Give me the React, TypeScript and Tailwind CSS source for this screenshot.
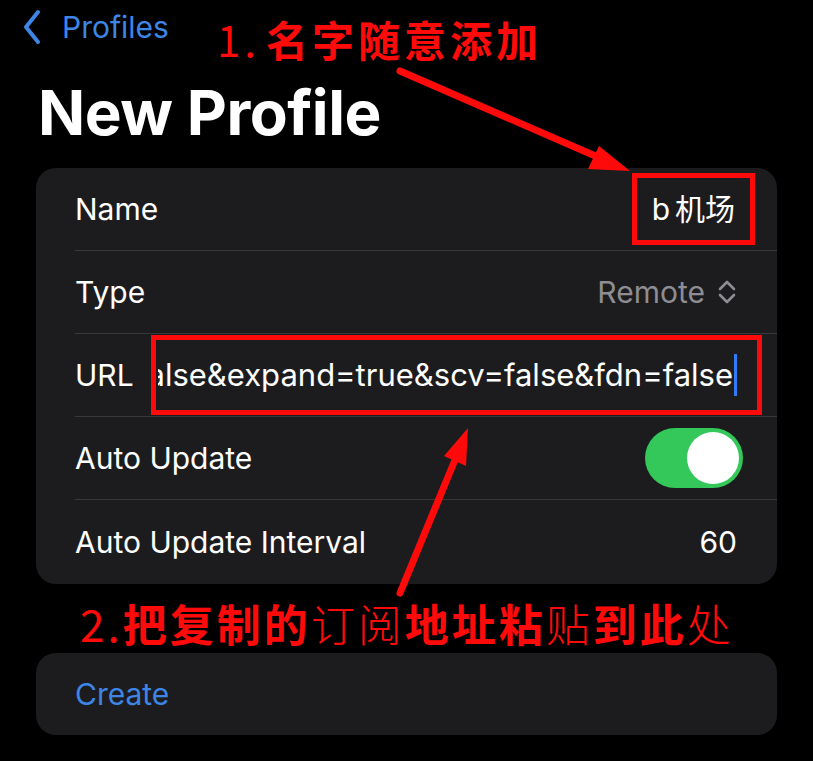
import React from 'react';

const red = '#ff0a0a';

function Row({ children, last = false }: { children: React.ReactNode; last?: boolean }) {
  return (
    <div className={(last ? 'h-[84px]' : 'h-[83px]') + ' pl-[39px] flex'}>
      <div
        className={
          'flex-1 min-w-0 flex items-center pr-[40px] ' + (last ? '' : 'border-b border-[#38383a]')
        }
      >
        {children}
      </div>
    </div>
  );
}

export default function App() {
  return (
    <div
      className="relative w-[813px] h-[761px] bg-black overflow-hidden text-white"
      style={{ fontFamily: 'Inter, "Noto Sans CJK SC", sans-serif' }}
    >
      {/* nav row */}
      <div className="h-[54px] flex items-center pl-[22px]">
        <svg width="20" height="36" viewBox="0 0 20 36" fill="none">
          <path d="M16 3 L4 18 L16 33" stroke="#3d86e6" strokeWidth="4" strokeLinecap="round" strokeLinejoin="round" />
        </svg>
        <span className="ml-[20px] text-[30px] text-[#3d86e6] leading-none">Profiles</span>
        <span
          className="self-start mt-[18px] ml-[48px] text-[42px] leading-none tracking-[4px] whitespace-nowrap"
          style={{ color: red, fontFamily: '"Noto Sans CJK SC", sans-serif' }}
        >
          <span className="font-normal">1.</span>
          <span className="font-bold ml-[6px]">名字随意添加</span>
        </span>
      </div>

      <h1 className="pl-[38px] mt-[28px] text-[62px] font-bold leading-none tracking-[-0.5px]">New Profile</h1>

      {/* form card */}
      <div className="mx-[36px] mt-[24px] rounded-[20px] bg-[#1c1c1e] text-[30px]">
        <Row>
          <span>Name</span>
          <div className="ml-auto -mr-[18px] h-[72px] px-[15px] flex items-center border-[5px] border-[#ff0a0a]">
            <span>b</span>
            <span className="ml-[5px]">机场</span>
          </div>
        </Row>
        <Row>
          <span>Type</span>
          <span className="ml-auto text-[#8d8d93]">Remote</span>
          <svg className="ml-[12px]" width="20" height="28" viewBox="0 0 20 28" fill="none">
            <path d="M3 11 L10 4 L17 11" stroke="#8d8d93" strokeWidth="2.6" strokeLinecap="round" strokeLinejoin="round" />
            <path d="M3 17 L10 24 L17 17" stroke="#8d8d93" strokeWidth="2.6" strokeLinecap="round" strokeLinejoin="round" />
          </svg>
        </Row>
        <Row>
          <span className="shrink-0">URL</span>
          <div className="ml-[17px] -mr-[25px] flex-1 min-w-0 h-[80px] border-[5px] border-[#ff0a0a] flex items-center pl-[2px] pr-[20px]">
            <div className="flex-1 min-w-0 overflow-hidden flex justify-end items-center">
              <span className="shrink-0 whitespace-nowrap text-[31px]">false&amp;expand=true&amp;scv=false&amp;fdn=false</span>
              <span className="shrink-0 w-[3px] h-[42px] bg-[#2f7cf6] ml-[1px]" />
            </div>
          </div>
        </Row>
        <Row>
          <span>Auto Update</span>
          <div className="ml-auto -mr-[6px] w-[98px] h-[60px] rounded-full bg-[#34c759] flex items-center justify-end pr-[4px]">
            <div className="w-[52px] h-[52px] rounded-full bg-white" />
          </div>
        </Row>
        <Row last>
          <span>Auto Update Interval</span>
          <span className="ml-auto">60</span>
        </Row>
      </div>

      {/* annotation 2 */}
      <div
        className="h-[69px] flex items-start pt-[17px] pl-[80px] text-[44px] leading-none tracking-[3px] whitespace-nowrap"
        style={{ color: red, fontFamily: '"Noto Sans CJK SC", sans-serif' }}
      >
        <span className="font-normal">2. </span>
        <span className="font-bold">把复制的</span>
        <span className="font-light">订阅</span>
        <span className="font-bold">地址粘</span>
        <span className="font-light">贴</span>
        <span className="font-bold">到此</span>
        <span className="font-light">处</span>
      </div>

      {/* create card */}
      <div className="mx-[36px] h-[82px] rounded-[20px] bg-[#1c1c1e] flex items-center pl-[39px]">
        <span className="text-[30px] text-[#3d86e6]">Create</span>
      </div>

      {/* arrows */}
      <svg className="absolute inset-0 pointer-events-none" width="813" height="761" viewBox="0 0 813 761">
        <line x1="400" y1="71" x2="600" y2="158" stroke={red} strokeWidth="7" strokeLinecap="round" />
        <polygon points="630,171 599,146 588,169" fill={red} />
        <line x1="400" y1="593" x2="455" y2="460" stroke={red} strokeWidth="7" strokeLinecap="round" />
        <polygon points="468,428 444,456 466,466" fill={red} />
      </svg>
    </div>
  );
}
